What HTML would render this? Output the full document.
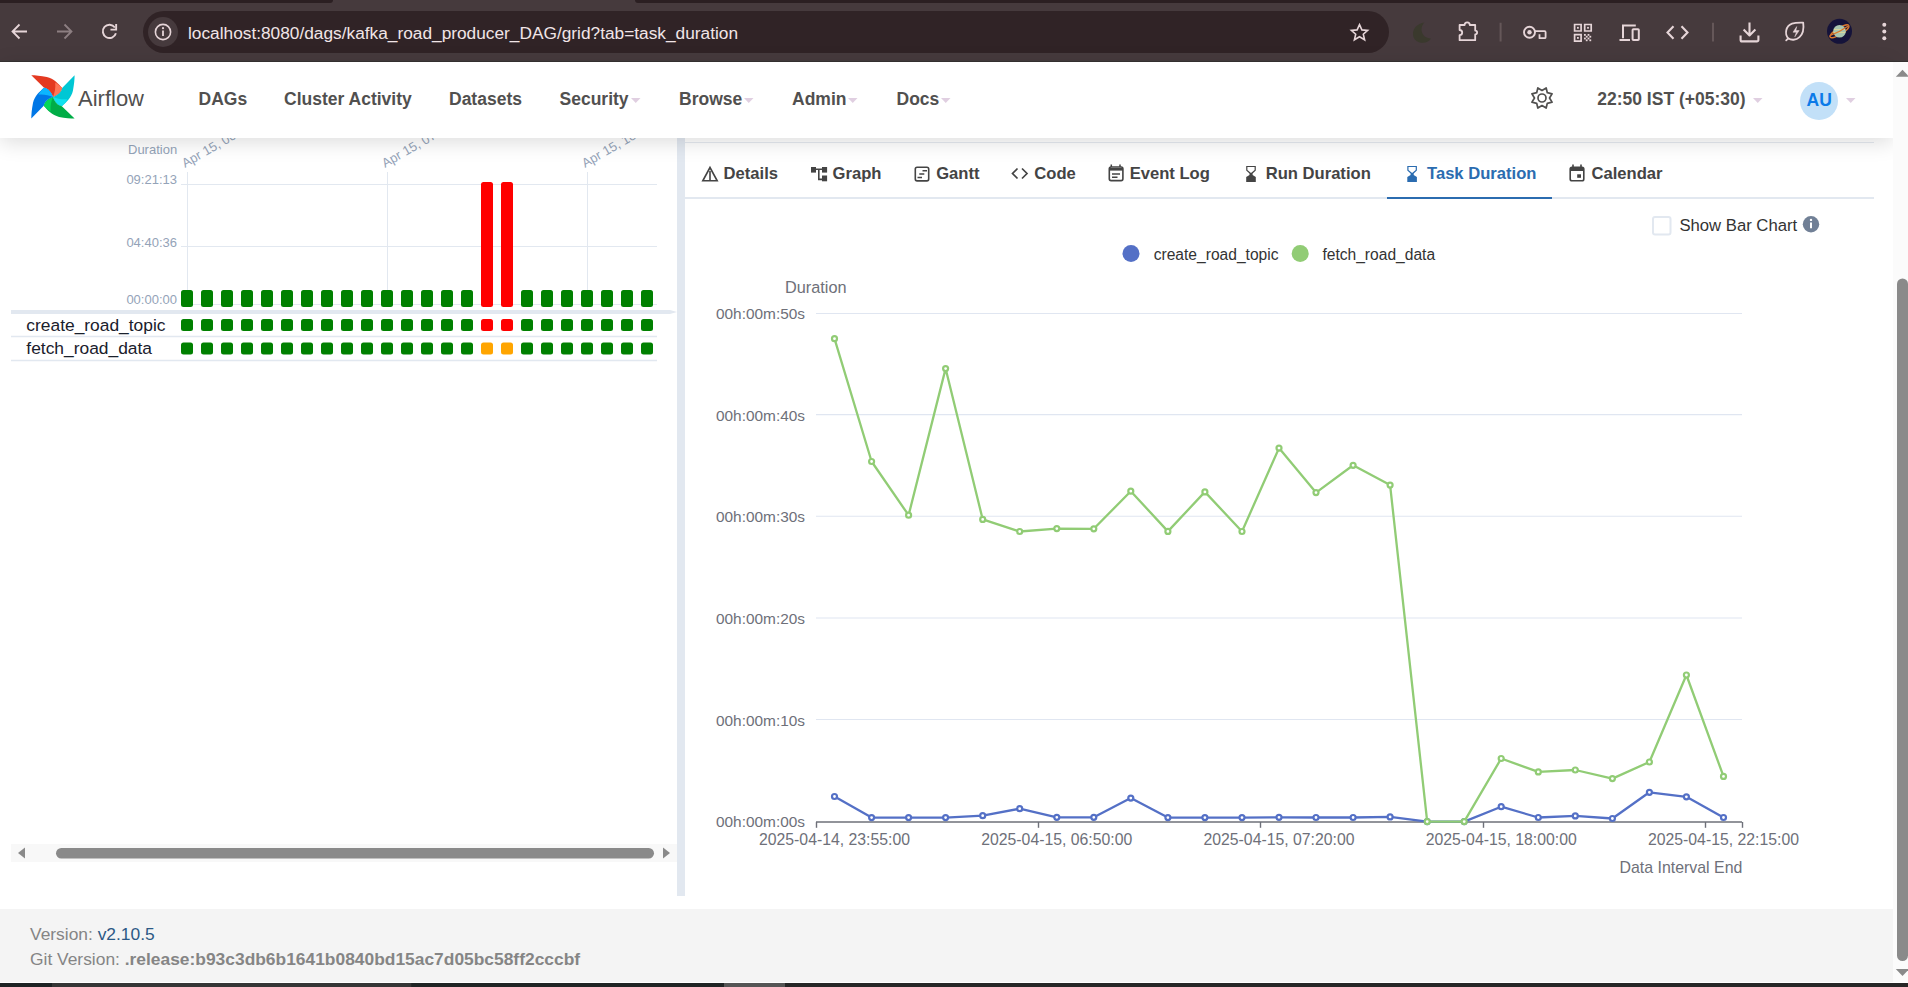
<!DOCTYPE html>
<html><head><meta charset="utf-8">
<style>
*{box-sizing:border-box;margin:0;padding:0}
html,body{width:1908px;height:987px;overflow:hidden;background:#fff;font-family:"Liberation Sans",sans-serif}
body{position:relative}
.a{position:absolute}
.t{position:absolute;white-space:nowrap;line-height:1}
svg{position:absolute;overflow:visible}
</style></head><body>
<div class="a" style="left:0;top:0;width:1908px;height:62px;background:#463a3d"></div>
<div class="a" style="left:0;top:0;width:333px;height:3px;background:#2b1f22;border-bottom-right-radius:3px"></div>
<div class="a" style="left:635px;top:0;width:1273px;height:3px;background:#2b1f22;border-bottom-left-radius:3px"></div>
<div class="a" style="left:0;top:60px;width:1908px;height:1px;background:#433c3d"></div>
<div class="a" style="left:0;top:61px;width:1908px;height:1px;background:#363232"></div>
<div class="a" style="left:143px;top:11px;width:1246px;height:42px;border-radius:21px;background:#302326"></div>
<div class="a" style="left:148px;top:17px;width:30px;height:30px;border-radius:15px;background:#463a3d"></div>
<svg class="a" style="left:0;top:0" width="1908" height="62" viewBox="0 0 1908 62">
<g fill="none" stroke="#e6d5d8" stroke-width="1.8">
 <path d="M27 31.5H13.5M19.5 24.5l-7 7 7 7"/>
 <path d="M57 31.5h13.5M64.5 24.5l7 7-7 7" stroke="#8d7f82"/>
 <path d="M115.9 33.2A6.65 6.65 0 1 1 114.9 27.5" stroke-width="1.9"/><path d="M110.45 29.6H116.15V23.9" stroke-width="1.9"/>
 <circle cx="163" cy="32" r="7.6" stroke-width="1.6"/>
 <path d="M163 30.5v5.5" stroke-width="1.8"/>
 <path d="M1359.5 24.6l2.4 5.3 5.7.5-4.3 3.8 1.3 5.6-5.1-3-5.1 3 1.3-5.6-4.3-3.8 5.7-.5z" stroke-width="1.6"/>
 <path d="M1459.6 25H1464.6A2.6 2.6 0 0 1 1469.8 25H1475.2V30.6A1.9 1.9 0 0 1 1475.2 34.4V40.2H1459.6V35.2A2.6 2.6 0 0 0 1459.6 30Z" stroke-width="1.8" stroke-linejoin="round"/>
 <path d="M1500.6 22.8v18.6M1713 22.8v18.6" stroke="#655759" stroke-width="2"/>
 <circle cx="1529.5" cy="32.3" r="5.5" stroke-width="1.9"/>
 <path d="M1535 31.2H1544.6A1 1 0 0 1 1545.6 32.2V37.2A1 1 0 0 1 1544.6 38.2H1539.5V34.2" stroke-width="1.8" stroke-linejoin="round"/>
 <path d="M1574.6 24.5h6.5v6.5h-6.5zM1584.7 24.5h6.5v6.5h-6.5zM1574.6 34.6h6.5v6.5h-6.5z" stroke-width="1.7"/>
 <path d="M1623 38.2V25.4h12.8M1619.5 40h10.5" stroke-width="2"/>
 <rect x="1632.6" y="29.2" width="6.2" height="10.8" rx="0.8" stroke-width="2"/>
 <path d="M1673.5 26.2l-6 6.3 6 6.3M1681.5 26.2l6 6.3-6 6.3" stroke-width="2.1"/>
 <path d="M1749.5 22.5v12.5M1743.6 29.6l5.9 5.9 5.9-5.9M1740.6 35.5v4.4a1.5 1.5 0 0 0 1.5 1.5h14.8a1.5 1.5 0 0 0 1.5-1.5v-4.4" stroke-width="2.1" stroke-linejoin="round"/>
 <path d="M1788.2 38.3C1784.5 34 1785.5 26 1792 23.6C1795.5 22.4 1800 22.5 1803.2 22.6C1803.8 27 1803.5 33.5 1799.5 37.2C1796 40.5 1791 40.3 1788.2 38.3ZM1786.2 40.3l2-2" stroke-width="1.8" stroke-linejoin="round" stroke-linecap="round"/>
 <path d="M1796.7 26.6l-3.7 5.6h3.4l-1.6 4.6 4.4-6.2h-3.3z" fill="#e6d5d8" stroke-width="0.5"/>
</g>
<g fill="#e6d5d8">
 <circle cx="163" cy="28.2" r="1.1"/>
 <circle cx="1529.5" cy="32.3" r="2.2"/>
 <rect x="1577" y="26.9" width="1.8" height="1.8"/><rect x="1587.1" y="26.9" width="1.8" height="1.8"/><rect x="1577" y="37" width="1.8" height="1.8"/>
 <rect x="1584" y="34" width="1.8" height="1.8"/><rect x="1587.6" y="34" width="1.8" height="1.8"/><rect x="1585.8" y="35.8" width="1.8" height="1.8"/><rect x="1589.4" y="35.8" width="1.8" height="1.8"/><rect x="1584" y="37.6" width="1.8" height="1.8"/><rect x="1587.6" y="37.6" width="1.8" height="1.8"/><rect x="1585.8" y="39.4" width="1.8" height="1.8"/><rect x="1589.4" y="39.4" width="1.8" height="1.8"/>
 <circle cx="1884.3" cy="24.8" r="2"/><circle cx="1884.3" cy="31.5" r="2"/><circle cx="1884.3" cy="38.2" r="2"/>
</g>
<path d="M1424.5 22.5C1417 23.5 1413 28.5 1413 34C1413 39.5 1417.5 42.8 1423 42.8C1426.5 42.8 1429.5 41 1431 38.5C1425.5 38.5 1421.5 34.5 1421.5 29.5C1421.5 26.5 1422.8 24 1424.5 22.5Z" fill="#3a392d"/>
<circle cx="1839.5" cy="31.3" r="12.5" fill="#15133a"/>
<ellipse cx="1839.5" cy="31.3" rx="11" ry="3.2" transform="rotate(-32 1839.5 31.3)" fill="none" stroke="#d9772e" stroke-width="1.3"/>
<circle cx="1839.5" cy="31.3" r="6.3" fill="#a9c6b0"/>
<path d="M1834 29.5h11M1833.5 32.5h12" stroke="#d8d59a" stroke-width="1.2"/>
<path d="M1830.8 35.2C1834 34 1844 29 1848.3 26" stroke="#d9772e" stroke-width="1.3" fill="none"/>
</svg>
<div class="t" style="left:188.00px;top:25.30px;font-size:17.3px;color:#f1e5e7;font-weight:normal;">localhost:8080/dags/kafka_road_producer_DAG/grid?tab=task_duration</div>
<div class="a" style="left:0;top:62px;width:1893px;height:76px;background:#fff;box-shadow:0 4px 20px rgba(0,0,0,.14);z-index:5">
<svg style="left:30.5px;top:13px" width="44" height="44" viewBox="0 0 44.5 44.5">
<path d="M22.2 22.2C27.4 20.5 30.9 17.0 31.5 13.2C28 9 23 3.5 16 2C10 .8 4 .3 .3 .3L13.2 12.9C17 13.5 20.5 17 22.2 22.2Z" fill="#e43921"/><path d="M22.2 22.2C27.4 20.5 30.9 17.0 31.5 13.2C29.5 11 27 9 24.5 7.6C25 13 24 18 22.2 22.2Z" fill="#ff7557"/>
<g transform="rotate(90 22.2 22.2)"><path d="M22.2 22.2C27.4 20.5 30.9 17.0 31.5 13.2C28 9 23 3.5 16 2C10 .8 4 .3 .3 .3L13.2 12.9C17 13.5 20.5 17 22.2 22.2Z" fill="#00c7d4"/><path d="M22.2 22.2C27.4 20.5 30.9 17.0 31.5 13.2C29.5 11 27 9 24.5 7.6C25 13 24 18 22.2 22.2Z" fill="#11e1ee"/></g>
<g transform="rotate(180 22.2 22.2)"><path d="M22.2 22.2C27.4 20.5 30.9 17.0 31.5 13.2C28 9 23 3.5 16 2C10 .8 4 .3 .3 .3L13.2 12.9C17 13.5 20.5 17 22.2 22.2Z" fill="#00ad46"/><path d="M22.2 22.2C27.4 20.5 30.9 17.0 31.5 13.2C29.5 11 27 9 24.5 7.6C25 13 24 18 22.2 22.2Z" fill="#04d659"/></g>
<g transform="rotate(270 22.2 22.2)"><path d="M22.2 22.2C27.4 20.5 30.9 17.0 31.5 13.2C28 9 23 3.5 16 2C10 .8 4 .3 .3 .3L13.2 12.9C17 13.5 20.5 17 22.2 22.2Z" fill="#0077e6"/><path d="M22.2 22.2C27.4 20.5 30.9 17.0 31.5 13.2C29.5 11 27 9 24.5 7.6C25 13 24 18 22.2 22.2Z" fill="#0cb6ff"/></g>
</svg>
<div class="t" style="left:78.00px;top:25.80px;font-size:22px;color:#51504f;font-weight:normal;">Airflow</div>
<div class="t" style="left:198.50px;top:29.12px;font-size:17.5px;color:#51504f;font-weight:bold;">DAGs</div>
<div class="t" style="left:284.00px;top:29.12px;font-size:17.5px;color:#51504f;font-weight:bold;">Cluster Activity</div>
<div class="t" style="left:449.00px;top:29.12px;font-size:17.5px;color:#51504f;font-weight:bold;">Datasets</div>
<div class="t" style="left:559.50px;top:29.12px;font-size:17.5px;color:#51504f;font-weight:bold;">Security</div>
<div class="t" style="left:679.00px;top:29.12px;font-size:17.5px;color:#51504f;font-weight:bold;">Browse</div>
<div class="t" style="left:792.00px;top:29.12px;font-size:17.5px;color:#51504f;font-weight:bold;">Admin</div>
<div class="t" style="left:896.50px;top:29.12px;font-size:17.5px;color:#51504f;font-weight:bold;">Docs</div>
<svg style="left:631.20px;top:35.599999999999994px" width="10" height="6" viewBox="0 0 10 6"><path d="M0 0H9.5L4.75 5.1Z" fill="#e0cfe1"/></svg>
<svg style="left:744.20px;top:35.599999999999994px" width="10" height="6" viewBox="0 0 10 6"><path d="M0 0H9.5L4.75 5.1Z" fill="#e0cfe1"/></svg>
<svg style="left:848.20px;top:35.599999999999994px" width="10" height="6" viewBox="0 0 10 6"><path d="M0 0H9.5L4.75 5.1Z" fill="#e0cfe1"/></svg>
<svg style="left:941.20px;top:35.599999999999994px" width="10" height="6" viewBox="0 0 10 6"><path d="M0 0H9.5L4.75 5.1Z" fill="#e0cfe1"/></svg>
<svg style="left:1753.20px;top:35.599999999999994px" width="10" height="6" viewBox="0 0 10 6"><path d="M0 0H9.5L4.75 5.1Z" fill="#e0cfe1"/></svg>
<svg style="left:1845.70px;top:35.599999999999994px" width="10" height="6" viewBox="0 0 10 6"><path d="M0 0H9.5L4.75 5.1Z" fill="#e0cfe1"/></svg>
<svg style="left:1530.1px;top:24.3px" width="24" height="24" viewBox="0 0 24 24"><path fill="none" stroke="#51504f" stroke-width="1.7" stroke-linejoin="round" d="M7.83 1.93 L12.00 4.50 L16.17 1.93 L17.30 6.70 L22.07 7.83 L19.50 12.00 L22.07 16.17 L17.30 17.30 L16.17 22.07 L12.00 19.50 L7.83 22.07 L6.70 17.30 L1.93 16.17 L4.50 12.00 L1.93 7.83 L6.70 6.70Z"/><circle cx="12" cy="12" r="4" fill="none" stroke="#51504f" stroke-width="1.7"/></svg>
<div class="t" style="left:1597.25px;top:29.12px;font-size:17.5px;color:#51504f;font-weight:bold;">22:50 IST (+05:30)</div>
<div class="a" style="left:1800px;top:19.5px;width:38px;height:38px;border-radius:19px;background:#c2e0f8"></div>
<div class="t" style="left:1806.50px;top:30.12px;font-size:17.5px;color:#0b7ae8;font-weight:bold;">AU</div>
</div>
<div class="t" style="left:128.00px;top:142.95px;font-size:13px;color:#94a3b8;font-weight:normal;">Duration</div>
<div class="t" style="right:1731.00px;top:173.25px;font-size:13px;color:#94a3b8;font-weight:normal;text-align:right;">09:21:13</div>
<div class="t" style="right:1731.00px;top:236.45px;font-size:13px;color:#94a3b8;font-weight:normal;text-align:right;">04:40:36</div>
<div class="t" style="right:1731.00px;top:293.25px;font-size:13px;color:#94a3b8;font-weight:normal;text-align:right;">00:00:00</div>
<svg style="left:0;top:0" width="1908" height="987" viewBox="0 0 1908 987"><path d="M181 184.5H657" stroke="#e2e8f0" stroke-width="1"/><path d="M181 246.5H657" stroke="#e2e8f0" stroke-width="1"/><path d="M181 304.5H657" stroke="#e2e8f0" stroke-width="1"/><path d="M187.5 172V304" stroke="#e2e8f0" stroke-width="1"/><path d="M387.5 172V304" stroke="#e2e8f0" stroke-width="1"/><path d="M587.5 172V304" stroke="#e2e8f0" stroke-width="1"/><rect x="181" y="290" width="12" height="17" rx="2.5" fill="#008000"/><rect x="181" y="319" width="12" height="12" rx="2.5" fill="#008000"/><rect x="181" y="342.5" width="12" height="12" rx="2.5" fill="#008000"/><rect x="201" y="290" width="12" height="17" rx="2.5" fill="#008000"/><rect x="201" y="319" width="12" height="12" rx="2.5" fill="#008000"/><rect x="201" y="342.5" width="12" height="12" rx="2.5" fill="#008000"/><rect x="221" y="290" width="12" height="17" rx="2.5" fill="#008000"/><rect x="221" y="319" width="12" height="12" rx="2.5" fill="#008000"/><rect x="221" y="342.5" width="12" height="12" rx="2.5" fill="#008000"/><rect x="241" y="290" width="12" height="17" rx="2.5" fill="#008000"/><rect x="241" y="319" width="12" height="12" rx="2.5" fill="#008000"/><rect x="241" y="342.5" width="12" height="12" rx="2.5" fill="#008000"/><rect x="261" y="290" width="12" height="17" rx="2.5" fill="#008000"/><rect x="261" y="319" width="12" height="12" rx="2.5" fill="#008000"/><rect x="261" y="342.5" width="12" height="12" rx="2.5" fill="#008000"/><rect x="281" y="290" width="12" height="17" rx="2.5" fill="#008000"/><rect x="281" y="319" width="12" height="12" rx="2.5" fill="#008000"/><rect x="281" y="342.5" width="12" height="12" rx="2.5" fill="#008000"/><rect x="301" y="290" width="12" height="17" rx="2.5" fill="#008000"/><rect x="301" y="319" width="12" height="12" rx="2.5" fill="#008000"/><rect x="301" y="342.5" width="12" height="12" rx="2.5" fill="#008000"/><rect x="321" y="290" width="12" height="17" rx="2.5" fill="#008000"/><rect x="321" y="319" width="12" height="12" rx="2.5" fill="#008000"/><rect x="321" y="342.5" width="12" height="12" rx="2.5" fill="#008000"/><rect x="341" y="290" width="12" height="17" rx="2.5" fill="#008000"/><rect x="341" y="319" width="12" height="12" rx="2.5" fill="#008000"/><rect x="341" y="342.5" width="12" height="12" rx="2.5" fill="#008000"/><rect x="361" y="290" width="12" height="17" rx="2.5" fill="#008000"/><rect x="361" y="319" width="12" height="12" rx="2.5" fill="#008000"/><rect x="361" y="342.5" width="12" height="12" rx="2.5" fill="#008000"/><rect x="381" y="290" width="12" height="17" rx="2.5" fill="#008000"/><rect x="381" y="319" width="12" height="12" rx="2.5" fill="#008000"/><rect x="381" y="342.5" width="12" height="12" rx="2.5" fill="#008000"/><rect x="401" y="290" width="12" height="17" rx="2.5" fill="#008000"/><rect x="401" y="319" width="12" height="12" rx="2.5" fill="#008000"/><rect x="401" y="342.5" width="12" height="12" rx="2.5" fill="#008000"/><rect x="421" y="290" width="12" height="17" rx="2.5" fill="#008000"/><rect x="421" y="319" width="12" height="12" rx="2.5" fill="#008000"/><rect x="421" y="342.5" width="12" height="12" rx="2.5" fill="#008000"/><rect x="441" y="290" width="12" height="17" rx="2.5" fill="#008000"/><rect x="441" y="319" width="12" height="12" rx="2.5" fill="#008000"/><rect x="441" y="342.5" width="12" height="12" rx="2.5" fill="#008000"/><rect x="461" y="290" width="12" height="17" rx="2.5" fill="#008000"/><rect x="461" y="319" width="12" height="12" rx="2.5" fill="#008000"/><rect x="461" y="342.5" width="12" height="12" rx="2.5" fill="#008000"/><rect x="481" y="182" width="12" height="125" rx="2.5" fill="#ff0000"/><rect x="481" y="319" width="12" height="12" rx="2.5" fill="#ff0000"/><rect x="481" y="342.5" width="12" height="12" rx="2.5" fill="#ffa500"/><rect x="501" y="182" width="12" height="125" rx="2.5" fill="#ff0000"/><rect x="501" y="319" width="12" height="12" rx="2.5" fill="#ff0000"/><rect x="501" y="342.5" width="12" height="12" rx="2.5" fill="#ffa500"/><rect x="521" y="290" width="12" height="17" rx="2.5" fill="#008000"/><rect x="521" y="319" width="12" height="12" rx="2.5" fill="#008000"/><rect x="521" y="342.5" width="12" height="12" rx="2.5" fill="#008000"/><rect x="541" y="290" width="12" height="17" rx="2.5" fill="#008000"/><rect x="541" y="319" width="12" height="12" rx="2.5" fill="#008000"/><rect x="541" y="342.5" width="12" height="12" rx="2.5" fill="#008000"/><rect x="561" y="290" width="12" height="17" rx="2.5" fill="#008000"/><rect x="561" y="319" width="12" height="12" rx="2.5" fill="#008000"/><rect x="561" y="342.5" width="12" height="12" rx="2.5" fill="#008000"/><rect x="581" y="290" width="12" height="17" rx="2.5" fill="#008000"/><rect x="581" y="319" width="12" height="12" rx="2.5" fill="#008000"/><rect x="581" y="342.5" width="12" height="12" rx="2.5" fill="#008000"/><rect x="601" y="290" width="12" height="17" rx="2.5" fill="#008000"/><rect x="601" y="319" width="12" height="12" rx="2.5" fill="#008000"/><rect x="601" y="342.5" width="12" height="12" rx="2.5" fill="#008000"/><rect x="621" y="290" width="12" height="17" rx="2.5" fill="#008000"/><rect x="621" y="319" width="12" height="12" rx="2.5" fill="#008000"/><rect x="621" y="342.5" width="12" height="12" rx="2.5" fill="#008000"/><rect x="641" y="290" width="12" height="17" rx="2.5" fill="#008000"/><rect x="641" y="319" width="12" height="12" rx="2.5" fill="#008000"/><rect x="641" y="342.5" width="12" height="12" rx="2.5" fill="#008000"/><path d="M11 310H670L677 312L670 314H11Z" fill="#e2e8f0"/><path d="M11 336.5H657M11 360.5H657" stroke="#e2e8f0" stroke-width="1.3"/><text x="185" y="168" transform="rotate(-30 185 168)" font-size="13" fill="#94a3b8" font-family="Liberation Sans">Apr 15, 00:00</text><text x="385" y="168" transform="rotate(-30 385 168)" font-size="13" fill="#94a3b8" font-family="Liberation Sans">Apr 15, 07:00</text><text x="585" y="168" transform="rotate(-30 585 168)" font-size="13" fill="#94a3b8" font-family="Liberation Sans">Apr 15, 18:00</text><rect x="11" y="844" width="666" height="18" fill="#f8f8f8"/><path d="M25 847.5v11l-7-5.5z" fill="#8a8a8a"/><path d="M663 847.5v11l7-5.5z" fill="#8a8a8a"/><rect x="56" y="848" width="598" height="10.5" rx="5.25" fill="#8a8a8a"/></svg>
<div class="t" style="left:26.30px;top:316.61px;font-size:17.4px;color:#1a202c;font-weight:normal;">create_road_topic</div>
<div class="t" style="left:26.30px;top:339.71px;font-size:17.4px;color:#1a202c;font-weight:normal;">fetch_road_data</div>
<div class="a" style="left:677px;top:138px;width:8px;height:758px;background:#e2e8f0"></div>
<div class="a" style="left:685px;top:142px;width:1189px;height:1px;background:#e6eaf0"></div>
<div class="a" style="left:685px;top:197px;width:1189px;height:2px;background:#e2e8f0"></div>
<div class="a" style="left:1387px;top:197px;width:165px;height:2px;background:#2b6cb0"></div>
<div class="t" style="left:723.60px;top:165.69px;font-size:16.6px;color:#444444;font-weight:bold;">Details</div>
<div class="t" style="left:832.60px;top:165.69px;font-size:16.6px;color:#444444;font-weight:bold;">Graph</div>
<div class="t" style="left:936.20px;top:165.69px;font-size:16.6px;color:#444444;font-weight:bold;">Gantt</div>
<div class="t" style="left:1034.30px;top:165.69px;font-size:16.6px;color:#444444;font-weight:bold;">Code</div>
<div class="t" style="left:1129.70px;top:165.69px;font-size:16.6px;color:#444444;font-weight:bold;">Event Log</div>
<div class="t" style="left:1265.70px;top:165.69px;font-size:16.6px;color:#444444;font-weight:bold;">Run Duration</div>
<div class="t" style="left:1427.00px;top:165.69px;font-size:16.6px;color:#2b6cb0;font-weight:bold;">Task Duration</div>
<div class="t" style="left:1591.50px;top:165.69px;font-size:16.6px;color:#444444;font-weight:bold;">Calendar</div>
<svg style="left:0;top:0" width="1908" height="987" viewBox="0 0 1908 987">
<g fill="none" stroke="#444444" stroke-width="1.6">
 <path d="M710 167.5L702.8 180.8H717.2Z M710 171V180.8"/>
<rect x="915.3" y="167.3" width="13.4" height="13.6" rx="1.8"/>
 <path d="M922.5 170.8h4.5M919.3 174.1h5M917.5 177.4h4.5" stroke-width="1.5"/>
 <path d="M1017.5 168.5l-5 5 5 5M1022 168.5l5 5-5 5" stroke-width="1.7"/>
 <rect x="1109.3" y="167" width="13.6" height="13.6" rx="1.8"/>
 <path d="M1109.3 169.3h13.6" stroke-width="2.6"/>
 <path d="M1112 174h8M1112 177.3h5.5M1111.3 164.5v2.5M1120 164.5v2.5" stroke-width="1.5"/>
 <rect x="1570.2" y="167.2" width="13.6" height="13.6" rx="1.8"/>
 <path d="M1570.2 169.5h13.6" stroke-width="3"/>
 <path d="M1573 164.5v3M1581 164.5v3" stroke-width="1.6"/>
</g>
<g fill="#444444">
 <rect x="811" y="167" width="5" height="5.6"/><rect x="822" y="167" width="5.1" height="5.6"/><rect x="822" y="175.5" width="5.1" height="5.8"/>
 <path d="M816 168.5h6v1.6h-2.4v8.5h2.4v1.6h-4v-10.1h-2z"/>
 <rect x="1577.2" y="174.3" width="3.8" height="3.5"/>
</g>
<path fill-rule="evenodd" fill="#444444" d="M1246.20 165.9H1255.80V170.6L1252.60 173.6V174.9L1255.80 177.1V182H1246.20V177.1L1249.50 174.9V173.6L1246.20 170.6ZM1247.40 167.1H1254.60V170.1L1251.00 172.9L1247.40 170.1Z"/>
<path fill-rule="evenodd" fill="#2b6cb0" d="M1407.30 165.9H1416.90V170.6L1413.70 173.6V174.9L1416.90 177.1V182H1407.30V177.1L1410.60 174.9V173.6L1407.30 170.6ZM1408.50 167.1H1415.70V170.1L1412.10 172.9L1408.50 170.1Z"/>
<rect x="1653" y="217" width="17.5" height="17.5" rx="2" fill="#fff" stroke="#e2e8f0" stroke-width="2"/>
<circle cx="1811" cy="224.2" r="8.2" fill="#718096"/>
<path d="M1811 222.6v5.6" stroke="#fff" stroke-width="2"/><circle cx="1811" cy="219.9" r="1.2" fill="#fff"/>
<circle cx="1131" cy="253.5" r="8.5" fill="#5470c6"/>
<circle cx="1300.2" cy="253.6" r="8.5" fill="#91cc75"/>
</svg>
<div class="t" style="left:1679.40px;top:218.31px;font-size:16.7px;color:#333333;font-weight:normal;">Show Bar Chart</div>
<div class="t" style="left:1153.70px;top:246.74px;font-size:15.6px;color:#333333;font-weight:normal;">create_road_topic</div>
<div class="t" style="left:1322.40px;top:246.74px;font-size:15.6px;color:#333333;font-weight:normal;">fetch_road_data</div>
<div class="t" style="left:785.00px;top:279.14px;font-size:16.3px;color:#6e7079;font-weight:normal;">Duration</div>
<div class="t" style="right:1103.00px;top:305.81px;font-size:15.4px;color:#6e7079;font-weight:normal;text-align:right;">00h:00m:50s</div>
<div class="t" style="right:1103.00px;top:407.53px;font-size:15.4px;color:#6e7079;font-weight:normal;text-align:right;">00h:00m:40s</div>
<div class="t" style="right:1103.00px;top:509.25px;font-size:15.4px;color:#6e7079;font-weight:normal;text-align:right;">00h:00m:30s</div>
<div class="t" style="right:1103.00px;top:610.97px;font-size:15.4px;color:#6e7079;font-weight:normal;text-align:right;">00h:00m:20s</div>
<div class="t" style="right:1103.00px;top:712.69px;font-size:15.4px;color:#6e7079;font-weight:normal;text-align:right;">00h:00m:10s</div>
<div class="t" style="right:1103.00px;top:814.41px;font-size:15.4px;color:#6e7079;font-weight:normal;text-align:right;">00h:00m:00s</div>
<svg style="left:0;top:0" width="1908" height="987" viewBox="0 0 1908 987"><path d="M816 313.5H1742" stroke="#e0e6f1" stroke-width="1.1"/><path d="M816 414.6H1742" stroke="#e0e6f1" stroke-width="1.1"/><path d="M816 516.2H1742" stroke="#e0e6f1" stroke-width="1.1"/><path d="M816 618H1742" stroke="#e0e6f1" stroke-width="1.1"/><path d="M816 719.5H1742" stroke="#e0e6f1" stroke-width="1.1"/><path d="M816 821.9H1742" stroke="#6e7079" stroke-width="1.5"/><path d="M816.5 822V827.8" stroke="#6e7079" stroke-width="1.4"/><path d="M1038.5 822V827.8" stroke="#6e7079" stroke-width="1.4"/><path d="M1260.5 822V827.8" stroke="#6e7079" stroke-width="1.4"/><path d="M1483.5 822V827.8" stroke="#6e7079" stroke-width="1.4"/><path d="M1705.5 822V827.8" stroke="#6e7079" stroke-width="1.4"/><path d="M1742.5 822V827.8" stroke="#6e7079" stroke-width="1.4"/><path d="M834.5 796.5 L871.6 817.6 L908.6 817.6 L945.6 817.6 L982.7 815.7 L1019.7 808.7 L1056.8 817.3 L1093.8 817.3 L1130.8 798.1 L1167.9 817.6 L1204.9 817.6 L1242.0 817.6 L1279.0 817.3 L1316.0 817.5 L1353.1 817.5 L1390.1 816.9 L1427.2 821.6 L1464.2 821.6 L1501.2 806.7 L1538.3 817.5 L1575.3 815.9 L1612.4 818.5 L1649.4 792.3 L1686.4 796.8 L1723.5 817.5" fill="none" stroke="#5470c6" stroke-width="2.3" stroke-linejoin="round"/><circle cx="834.5" cy="796.5" r="2.5" fill="#fff" stroke="#5470c6" stroke-width="2.2"/><circle cx="871.6" cy="817.6" r="2.5" fill="#fff" stroke="#5470c6" stroke-width="2.2"/><circle cx="908.6" cy="817.6" r="2.5" fill="#fff" stroke="#5470c6" stroke-width="2.2"/><circle cx="945.6" cy="817.6" r="2.5" fill="#fff" stroke="#5470c6" stroke-width="2.2"/><circle cx="982.7" cy="815.7" r="2.5" fill="#fff" stroke="#5470c6" stroke-width="2.2"/><circle cx="1019.7" cy="808.7" r="2.5" fill="#fff" stroke="#5470c6" stroke-width="2.2"/><circle cx="1056.8" cy="817.3" r="2.5" fill="#fff" stroke="#5470c6" stroke-width="2.2"/><circle cx="1093.8" cy="817.3" r="2.5" fill="#fff" stroke="#5470c6" stroke-width="2.2"/><circle cx="1130.8" cy="798.1" r="2.5" fill="#fff" stroke="#5470c6" stroke-width="2.2"/><circle cx="1167.9" cy="817.6" r="2.5" fill="#fff" stroke="#5470c6" stroke-width="2.2"/><circle cx="1204.9" cy="817.6" r="2.5" fill="#fff" stroke="#5470c6" stroke-width="2.2"/><circle cx="1242.0" cy="817.6" r="2.5" fill="#fff" stroke="#5470c6" stroke-width="2.2"/><circle cx="1279.0" cy="817.3" r="2.5" fill="#fff" stroke="#5470c6" stroke-width="2.2"/><circle cx="1316.0" cy="817.5" r="2.5" fill="#fff" stroke="#5470c6" stroke-width="2.2"/><circle cx="1353.1" cy="817.5" r="2.5" fill="#fff" stroke="#5470c6" stroke-width="2.2"/><circle cx="1390.1" cy="816.9" r="2.5" fill="#fff" stroke="#5470c6" stroke-width="2.2"/><circle cx="1427.2" cy="821.6" r="2.5" fill="#fff" stroke="#5470c6" stroke-width="2.2"/><circle cx="1464.2" cy="821.6" r="2.5" fill="#fff" stroke="#5470c6" stroke-width="2.2"/><circle cx="1501.2" cy="806.7" r="2.5" fill="#fff" stroke="#5470c6" stroke-width="2.2"/><circle cx="1538.3" cy="817.5" r="2.5" fill="#fff" stroke="#5470c6" stroke-width="2.2"/><circle cx="1575.3" cy="815.9" r="2.5" fill="#fff" stroke="#5470c6" stroke-width="2.2"/><circle cx="1612.4" cy="818.5" r="2.5" fill="#fff" stroke="#5470c6" stroke-width="2.2"/><circle cx="1649.4" cy="792.3" r="2.5" fill="#fff" stroke="#5470c6" stroke-width="2.2"/><circle cx="1686.4" cy="796.8" r="2.5" fill="#fff" stroke="#5470c6" stroke-width="2.2"/><circle cx="1723.5" cy="817.5" r="2.5" fill="#fff" stroke="#5470c6" stroke-width="2.2"/><path d="M834.5 338.7 L871.6 461.5 L908.6 515.2 L945.6 368.6 L982.7 519.4 L1019.7 531.5 L1056.8 528.6 L1093.8 528.8 L1130.8 491.2 L1167.9 531.4 L1204.9 491.9 L1242.0 531.5 L1279.0 448.1 L1316.0 492.6 L1353.1 465.3 L1390.1 485.1 L1427.2 821.6 L1464.2 821.6 L1501.2 758.5 L1538.3 771.9 L1575.3 770.0 L1612.4 778.6 L1649.4 762.0 L1686.4 675.0 L1723.5 776.4" fill="none" stroke="#91cc75" stroke-width="2.3" stroke-linejoin="round"/><circle cx="834.5" cy="338.7" r="2.5" fill="#fff" stroke="#91cc75" stroke-width="2.2"/><circle cx="871.6" cy="461.5" r="2.5" fill="#fff" stroke="#91cc75" stroke-width="2.2"/><circle cx="908.6" cy="515.2" r="2.5" fill="#fff" stroke="#91cc75" stroke-width="2.2"/><circle cx="945.6" cy="368.6" r="2.5" fill="#fff" stroke="#91cc75" stroke-width="2.2"/><circle cx="982.7" cy="519.4" r="2.5" fill="#fff" stroke="#91cc75" stroke-width="2.2"/><circle cx="1019.7" cy="531.5" r="2.5" fill="#fff" stroke="#91cc75" stroke-width="2.2"/><circle cx="1056.8" cy="528.6" r="2.5" fill="#fff" stroke="#91cc75" stroke-width="2.2"/><circle cx="1093.8" cy="528.8" r="2.5" fill="#fff" stroke="#91cc75" stroke-width="2.2"/><circle cx="1130.8" cy="491.2" r="2.5" fill="#fff" stroke="#91cc75" stroke-width="2.2"/><circle cx="1167.9" cy="531.4" r="2.5" fill="#fff" stroke="#91cc75" stroke-width="2.2"/><circle cx="1204.9" cy="491.9" r="2.5" fill="#fff" stroke="#91cc75" stroke-width="2.2"/><circle cx="1242.0" cy="531.5" r="2.5" fill="#fff" stroke="#91cc75" stroke-width="2.2"/><circle cx="1279.0" cy="448.1" r="2.5" fill="#fff" stroke="#91cc75" stroke-width="2.2"/><circle cx="1316.0" cy="492.6" r="2.5" fill="#fff" stroke="#91cc75" stroke-width="2.2"/><circle cx="1353.1" cy="465.3" r="2.5" fill="#fff" stroke="#91cc75" stroke-width="2.2"/><circle cx="1390.1" cy="485.1" r="2.5" fill="#fff" stroke="#91cc75" stroke-width="2.2"/><circle cx="1427.2" cy="821.6" r="2.5" fill="#fff" stroke="#91cc75" stroke-width="2.2"/><circle cx="1464.2" cy="821.6" r="2.5" fill="#fff" stroke="#91cc75" stroke-width="2.2"/><circle cx="1501.2" cy="758.5" r="2.5" fill="#fff" stroke="#91cc75" stroke-width="2.2"/><circle cx="1538.3" cy="771.9" r="2.5" fill="#fff" stroke="#91cc75" stroke-width="2.2"/><circle cx="1575.3" cy="770.0" r="2.5" fill="#fff" stroke="#91cc75" stroke-width="2.2"/><circle cx="1612.4" cy="778.6" r="2.5" fill="#fff" stroke="#91cc75" stroke-width="2.2"/><circle cx="1649.4" cy="762.0" r="2.5" fill="#fff" stroke="#91cc75" stroke-width="2.2"/><circle cx="1686.4" cy="675.0" r="2.5" fill="#fff" stroke="#91cc75" stroke-width="2.2"/><circle cx="1723.5" cy="776.4" r="2.5" fill="#fff" stroke="#91cc75" stroke-width="2.2"/></svg>
<div class="t" style="left:684.52px;width:300px;text-align:center;top:831.87px;font-size:15.8px;color:#6e7079">2025-04-14, 23:55:00</div>
<div class="t" style="left:906.76px;width:300px;text-align:center;top:831.87px;font-size:15.8px;color:#6e7079">2025-04-15, 06:50:00</div>
<div class="t" style="left:1129.00px;width:300px;text-align:center;top:831.87px;font-size:15.8px;color:#6e7079">2025-04-15, 07:20:00</div>
<div class="t" style="left:1351.24px;width:300px;text-align:center;top:831.87px;font-size:15.8px;color:#6e7079">2025-04-15, 18:00:00</div>
<div class="t" style="left:1573.48px;width:300px;text-align:center;top:831.87px;font-size:15.8px;color:#6e7079">2025-04-15, 22:15:00</div>
<div class="t" style="right:165.70px;top:860.09px;font-size:15.9px;color:#6e7079;font-weight:normal;text-align:right;">Data Interval End</div>
<div class="a" style="left:0;top:909px;width:1893px;height:74px;background:#f4f4f4"></div>
<div class="t" style="left:30.00px;top:925.81px;font-size:17.4px;color:#858585;font-weight:normal;">Version: <span style="color:#2c5985">v2.10.5</span></div>
<div class="t" style="left:30.00px;top:950.81px;font-size:17.4px;color:#858585;font-weight:normal;">Git Version: <b>.release:b93c3db6b1641b0840bd15ac7d05bc58ff2cccbf</b></div>
<svg style="left:0;top:0;z-index:8" width="1908" height="987" viewBox="0 0 1908 987">
<rect x="1893" y="63" width="15" height="919" fill="#fbfbfb"/>
<path d="M1895.8 76.8h13.4l-6.7-7.1z" fill="#8a8a8a"/>
<path d="M1895.8 969h13.4l-6.7 7.1z" fill="#8a8a8a"/>
<rect x="1897" y="278.5" width="11" height="682.5" rx="5.5" fill="#8a8a8a"/>
<rect x="0" y="982" width="1908" height="1" fill="#ffffff"/>
<rect x="0" y="983" width="1908" height="4" fill="#262626"/>
<rect x="0" y="983" width="52" height="4" fill="#1d2223"/>
<rect x="52" y="983" width="359.5" height="4" fill="#353535"/>
<rect x="411.5" y="983" width="312.5" height="4" fill="#1f2424"/>
<rect x="724" y="983" width="61" height="4" fill="#555555"/>
</svg>
</body></html>
